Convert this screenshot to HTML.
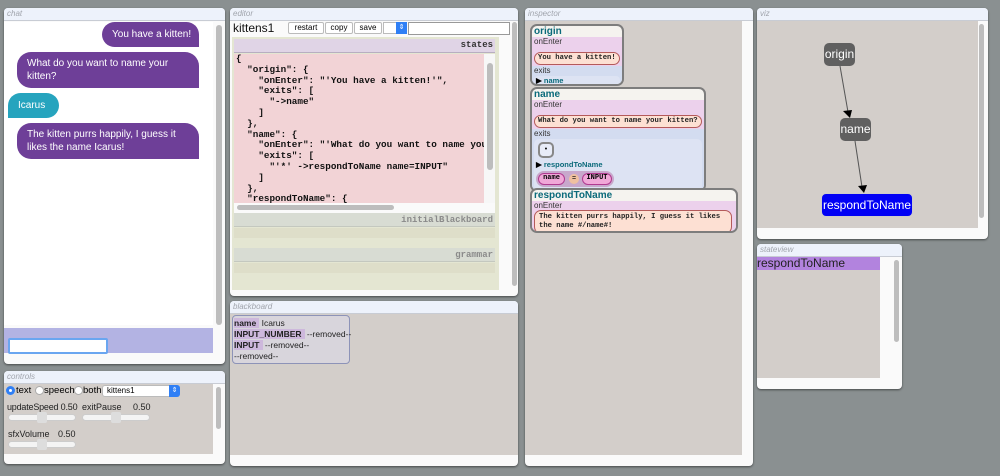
<!DOCTYPE html>
<html><head><meta charset="utf-8"><style>
*{box-sizing:border-box;margin:0;padding:0}
body{width:1000px;height:476px;background:#8a9091;position:relative;overflow:hidden;font-family:"Liberation Sans",sans-serif}
.p{position:absolute;background:#fafafa;border-radius:4px;box-shadow:0 1px 2px rgba(0,0,0,.5);overflow:hidden}
.t{height:13px;background:#edf2fb;border-bottom:1px solid #c8ccd4;font-size:8px;font-style:italic;color:#a0a4ac;padding-left:3px;line-height:12px}
.a{position:absolute}
.sb{position:absolute;background:#bdbdbd;border-radius:3px}
.bub{position:absolute;background:#6e3f98;color:#fff;font-size:10px;line-height:13px;border-radius:14px 14px 0 14px;padding:0 10px}
.mono{font-family:"Liberation Mono",monospace}
.card{position:absolute;background:#f5f3ef;border:2px solid #7d7d7d;border-radius:7px;overflow:hidden}
.card .h{color:#0a6a7a;font-weight:bold;font-size:10px;padding-left:2px;line-height:11px}
.lab{font-size:8px;color:#333;padding-left:2px;line-height:9px}
.pink{background:#ecd1ec;padding-bottom:1px}
.blue{background:#d3dcf0}
.str{background:#fde0d3;border:1.5px solid #b45a5a;border-radius:7px;font-family:"Liberation Mono",monospace;font-size:7.2px;font-weight:bold;color:#222;margin:0 2px;padding:1px 3px;line-height:9px;white-space:nowrap;display:inline-block}
.node{position:absolute;background:#606060;color:#fff;border-radius:5px;font-size:12px;text-align:center;line-height:23px}
.btn{position:absolute;height:12px;background:#fff;border:1px solid #bbb;border-radius:2px;font-size:8px;line-height:10px;text-align:center}
.nw{white-space:nowrap}
</style></head><body>

<!-- chat -->
<div class="p" style="left:4px;top:8px;width:221px;height:356px">
<div class="t">chat</div>
<div class="a" style="left:0;top:14px;width:209px;height:303px;background:#fff"></div>
<div class="bub nw" style="left:98px;top:14px;width:97px;height:25px;line-height:25px">You have a kitten!</div>
<div class="bub" style="left:13px;top:44px;width:182px;height:36px;padding-top:5px">What do you want to name your kitten?</div>
<div class="bub" style="left:4px;top:85px;width:51px;height:25px;line-height:25px;background:#26a4be;border-radius:14px 14px 14px 0">Icarus</div>
<div class="bub" style="left:13px;top:115px;width:182px;height:36px;padding-top:5px">The kitten purrs happily, I guess it likes the name Icarus!</div>
<div class="a" style="left:0;top:320px;width:209px;height:25px;background:#b3b3e3"></div>
<div class="a" style="left:4px;top:330px;width:100px;height:16px;background:#fff;border:2px solid #6aa6f0;border-radius:2px"></div>
<div class="sb" style="left:212px;top:17px;width:6px;height:300px"></div>
</div>

<!-- controls -->
<div class="p" style="left:4px;top:371px;width:221px;height:93px">
<div class="t">controls</div>
<div class="a" style="left:0;top:13px;width:209px;height:70px;background:#d3ceca"></div>
<div class="a" style="left:2px;top:15px;width:9px;height:9px;border-radius:50%;background:#2f7ff5"></div>
<div class="a" style="left:5px;top:18px;width:3px;height:3px;border-radius:50%;background:#fff"></div>
<div class="a nw" style="left:12px;top:14px;font-size:9.5px">text</div>
<div class="a" style="left:31px;top:15px;width:9px;height:9px;border-radius:50%;background:#fff;border:1px solid #aaa"></div>
<div class="a nw" style="left:40px;top:14px;font-size:9.5px">speech</div>
<div class="a" style="left:70px;top:15px;width:9px;height:9px;border-radius:50%;background:#fff;border:1px solid #aaa"></div>
<div class="a nw" style="left:79px;top:14px;font-size:9.5px">both</div>
<div class="a" style="left:98px;top:14px;width:78px;height:12px;background:#fff;border:1px solid #bbb;border-radius:3px;font-size:8px;padding-left:4px;line-height:10px">kittens1</div>
<div class="a" style="left:165px;top:14px;width:11px;height:12px;background:#2f7ff5;border-radius:0 3px 3px 0;color:#fff;font-size:7px;text-align:center;line-height:12px">⇕</div>
<div class="a nw" style="left:3px;top:31px;font-size:9px;color:#222;letter-spacing:-0.2px">updateSpeed 0.50</div>
<div class="a nw" style="left:78px;top:31px;font-size:9px;color:#222">exitPause</div>
<div class="a nw" style="left:129px;top:31px;font-size:9px;color:#222">0.50</div>
<div class="a" style="left:4px;top:43px;width:68px;height:7px;background:#f4f4f4;border:1px solid #ccc;border-radius:4px"></div>
<div class="a" style="left:33px;top:41px;width:10px;height:11px;background:#ddd;border-radius:2px"></div>
<div class="a" style="left:78px;top:43px;width:68px;height:7px;background:#f4f4f4;border:1px solid #ccc;border-radius:4px"></div>
<div class="a" style="left:107px;top:41px;width:10px;height:11px;background:#ddd;border-radius:2px"></div>
<div class="a nw" style="left:4px;top:58px;font-size:9px;color:#222">sfxVolume</div>
<div class="a nw" style="left:54px;top:58px;font-size:9px;color:#222">0.50</div>
<div class="a" style="left:4px;top:70px;width:68px;height:7px;background:#f4f4f4;border:1px solid #ccc;border-radius:4px"></div>
<div class="a" style="left:33px;top:68px;width:10px;height:11px;background:#ddd;border-radius:2px"></div>
<div class="sb" style="left:212px;top:16px;width:5px;height:42px"></div>
</div>

<!-- editor -->
<div class="p" style="left:230px;top:8px;width:288px;height:288px">
<div class="t">editor</div>
<div class="a" style="left:3px;top:13px;font-size:12px;color:#111">kittens1</div>
<div class="btn" style="left:58px;top:14px;width:36px">restart</div>
<div class="btn" style="left:95px;top:14px;width:28px">copy</div>
<div class="btn" style="left:124px;top:14px;width:28px">save</div>
<div class="a" style="left:153px;top:14px;width:24px;height:12px;background:#fff;border:1px solid #bbb"></div>
<div class="a" style="left:166px;top:14px;width:11px;height:12px;background:#2f7ff5;color:#fff;font-size:7px;text-align:center;line-height:12px">⇕</div>
<div class="a" style="left:178px;top:14px;width:102px;height:13px;background:#fff;border:1px solid #999"></div>
<div class="a" style="left:2px;top:29px;width:267px;height:253px;background:#e4e6d2"></div>
<div class="a" style="left:4px;top:31px;width:261px;height:14px;background:#e0d4e6;border-bottom:1px solid #b8aec0;font-family:'Liberation Mono',monospace;font-weight:bold;font-size:9px;text-align:right;padding-right:2px;line-height:13px;color:#333">states</div>
<div class="a mono" style="left:4px;top:46px;width:250px;height:149px;background:#f2d3d6;font-size:9.3px;font-weight:bold;line-height:10.8px;white-space:pre;overflow:hidden;color:#111;padding-left:2px">{
  "origin": {
    "onEnter": "'You have a kitten!'",
    "exits": [
      "->name"
    ]
  },
  "name": {
    "onEnter": "'What do you want to name you
    "exits": [
      "'*' ->respondToName name=INPUT"
    ]
  },
  "respondToName": {</div>
<div class="a" style="left:254px;top:46px;width:11px;height:149px;background:#f7f7f7"></div>
<div class="sb" style="left:257px;top:55px;width:6px;height:107px"></div>
<div class="a" style="left:4px;top:195px;width:261px;height:10px;background:#fafafa"></div>
<div class="sb" style="left:7px;top:197px;width:157px;height:5px"></div>
<div class="a mono" style="left:4px;top:205px;width:261px;height:14px;background:#d8dcd3;border-bottom:1px solid #c4c8bf;font-size:9px;font-weight:bold;color:#8a8a8a;text-align:right;padding-right:2px;line-height:14px">initialBlackboard</div>
<div class="a" style="left:4px;top:220px;width:261px;height:10px;background:#dedec9"></div>
<div class="a mono" style="left:4px;top:240px;width:261px;height:14px;background:#d8dcd3;border-bottom:1px solid #c4c8bf;font-size:9px;font-weight:bold;color:#8a8a8a;text-align:right;padding-right:2px;line-height:14px">grammar</div>
<div class="a" style="left:4px;top:255px;width:261px;height:10px;background:#dedec9"></div>
<div class="sb" style="left:282px;top:14px;width:5px;height:264px"></div>
</div>

<!-- blackboard -->
<div class="p" style="left:230px;top:301px;width:288px;height:165px">
<div class="t">blackboard</div>
<div class="a" style="left:0;top:13px;width:288px;height:141px;background:#d3ceca"></div>
<div class="a nw" style="left:2px;top:14px;width:118px;height:49px;background:#d8d5dc;border:1px solid #8d93b8;border-radius:4px;font-size:8.5px;line-height:11px;padding:2px 1px;color:#222">
<div><b style="background:#cdb8dc;padding-right:3px">name</b> Icarus</div>
<div><b style="background:#cdb8dc;padding-right:3px">INPUT_NUMBER</b> --removed--</div>
<div><b style="background:#cdb8dc;padding-right:3px">INPUT</b> --removed--</div>
<div>--removed--</div></div>
</div>

<!-- inspector -->
<div class="p" style="left:525px;top:8px;width:228px;height:458px">
<div class="t">inspector</div>
<div class="a" style="left:0;top:13px;width:217px;height:434px;background:#d3ceca"></div>
<div class="card" style="left:5px;top:16px;width:94px;height:62px">
<div class="h">origin</div>
<div class="pink"><div class="lab">onEnter</div><div class="str">You have a kitten!</div></div>
<div class="blue" style="height:22px"><div class="lab">exits</div><div style="margin:1px 2px;background:#dde3f3;border-radius:4px;height:10px;font-size:7.5px;font-weight:bold;color:#0a6a7a;line-height:10px;padding-left:2px"><span style="color:#000">▶</span> name</div></div>
</div>
<div class="card" style="left:5px;top:79px;width:176px;height:105px">
<div class="h">name</div>
<div class="pink"><div class="lab">onEnter</div><div class="str">What do you want to name your kitten?</div></div>
<div class="blue" style="height:66px"><div class="lab">exits</div>
<div style="margin:1px 2px;background:#dde3f3;border-radius:5px;height:52px;position:relative">
<div class="a" style="left:4px;top:3px;width:16px;height:16px;border:2px solid #888;border-radius:5px;background:#e8ecf8;font-size:7px;text-align:center;line-height:12px">•</div>
<div class="a nw" style="left:2px;top:21px;font-size:7.5px;font-weight:bold;color:#0a6a7a"><span style="color:#000">▶</span> respondToName</div>
<div class="a" style="left:2px;top:32px;width:78px;height:16px;background:#c8a8cc;border-radius:8px"></div>
<div class="a mono" style="left:4px;top:34px;width:27px;height:12px;background:#f0a8d8;border:1.5px solid #b03a90;border-radius:6px;font-size:7px;font-weight:bold;text-align:center;line-height:9px">name</div>
<div class="a" style="left:35px;top:35px;width:10px;height:10px;background:#f0c0a0;border-radius:50%;font-size:7px;text-align:center;line-height:10px">=</div>
<div class="a mono" style="left:48px;top:34px;width:30px;height:12px;background:#f0a8d8;border:1.5px solid #b03a90;border-radius:6px;font-size:7px;font-weight:bold;text-align:center;line-height:9px">INPUT</div>
</div></div>
</div>
<div class="card" style="left:5px;top:180px;width:208px;height:45px">
<div class="h">respondToName</div>
<div class="pink" style="height:32px"><div class="lab">onEnter</div><div class="str" style="line-height:9px;white-space:normal;width:198px;padding:2px 4px">The kitten purrs happily, I guess it likes the name #/name#!</div></div>
</div>
</div>

<!-- viz -->
<div class="p" style="left:757px;top:8px;width:231px;height:231px">
<div class="t">viz</div>
<div class="a" style="left:0;top:13px;width:221px;height:207px;background:#d3ceca"></div>
<svg class="a" style="left:0;top:0" width="231" height="231">
<line x1="83" y1="58" x2="91" y2="104" stroke="#555" stroke-width="1"/>
<polygon points="86,103 95,102 93,110" fill="#000"/>
<line x1="98" y1="133" x2="105" y2="179" stroke="#555" stroke-width="1"/>
<polygon points="101,178 110,177 107,185" fill="#000"/>
</svg>
<div class="node" style="left:67px;top:35px;width:31px;height:23px">origin</div>
<div class="node" style="left:83px;top:110px;width:31px;height:23px">name</div>
<div class="node" style="left:64px;top:185px;width:92px;height:24px;background:#0000f5;border:1px solid #ccc">respondToName</div>
<div class="sb" style="left:222px;top:16px;width:5px;height:194px"></div>
</div>

<!-- stateview -->
<div class="p" style="left:757px;top:244px;width:145px;height:145px">
<div class="t">stateview</div>
<div class="a" style="left:0;top:13px;width:123px;height:121px;background:#d3ceca"></div>
<div class="a" style="left:0;top:13px;width:123px;height:13px;background:#b283de;font-size:12px;line-height:13px;color:#222">respondToName</div>
<div class="sb" style="left:137px;top:16px;width:5px;height:82px"></div>
</div>
</body></html>
